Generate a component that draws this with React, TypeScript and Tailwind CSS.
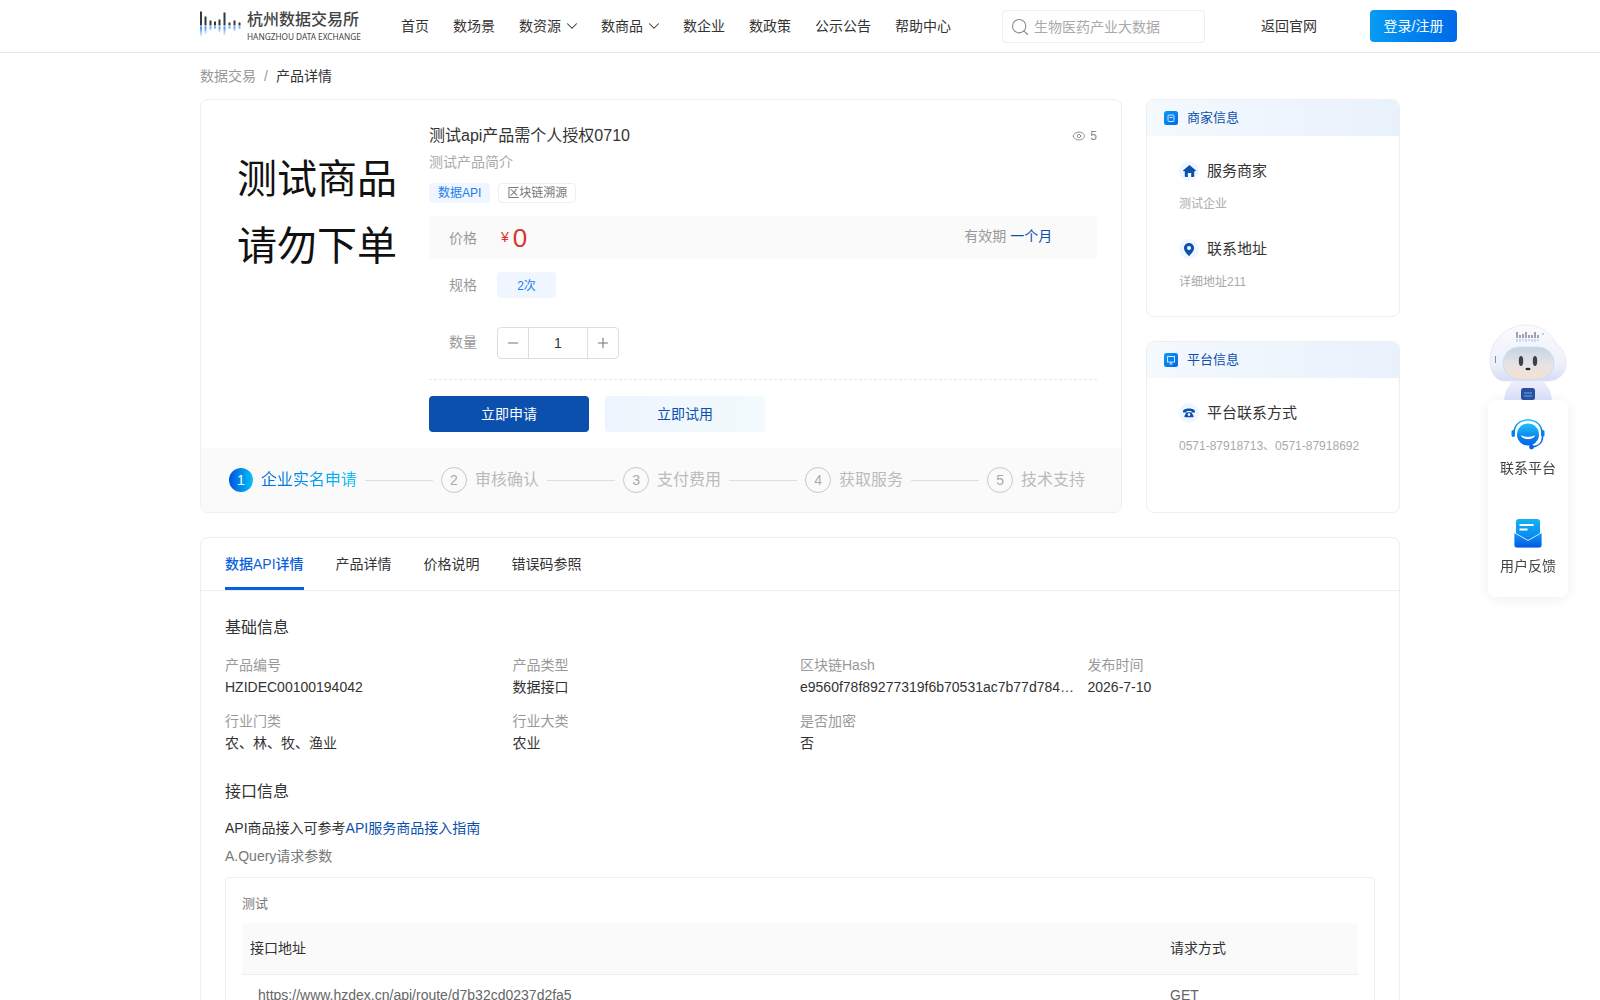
import { ChevronDown, Eye, Minus, Plus, Search } from "lucide-react"

const font = { fontFamily: '"Liberation Sans", "Noto Sans CJK SC", sans-serif' }

// logo bars: x, dark height, blue height
const bars: [number, number, number][] = [
    [0, 14, 10], [4.5, 9, 8], [9.5, 5, 4], [14, 4, 3], [18.5, 6, 6], [23.5, 13, 9], [28.5, 3, 3], [33.5, 5, 5], [38.5, 3, 3],
]

const navs = [
    { name: "首页" },
    { name: "数场景" },
    { name: "数资源", arrow: true },
    { name: "数商品", arrow: true },
    { name: "数企业" },
    { name: "数政策" },
    { name: "公示公告" },
    { name: "帮助中心" },
]

const steps = ["企业实名申请", "审核确认", "支付费用", "获取服务", "技术支持"]

const tabs = ["数据API详情", "产品详情", "价格说明", "错误码参照"]

const info = [
    { label: "产品编号", value: "HZIDEC00100194042" },
    { label: "产品类型", value: "数据接口" },
    { label: "区块链Hash", value: "e9560f78f89277319f6b70531ac7b77d784…" },
    { label: "发布时间", value: "2026-7-10" },
    { label: "行业门类", value: "农、林、牧、渔业" },
    { label: "行业大类", value: "农业" },
    { label: "是否加密", value: "否" },
]

function Logo() {
    return (
        <div className="flex w-[201px] items-center gap-[5px]">
            <svg width="42" height="30" viewBox="0 0 42 30">
                <defs>
                    <linearGradient id="logoBlue" x1="0" y1="0" x2="0" y2="1">
                        <stop offset="0" stopColor="#2f8df5" />
                        <stop offset="1" stopColor="#2f8df5" stopOpacity="0.1" />
                    </linearGradient>
                </defs>
                {bars.map(([x, h, b], i) => (
                    <g key={i}>
                        <rect x={x} y={14.5 - h} width="2" height={h} fill="#333a42" />
                        <rect x={x} y={15.5} width="2" height={b} fill="url(#logoBlue)" />
                    </g>
                ))}
            </svg>
            <div className="text-[#444]">
                <div className="text-[16px] leading-[20px] font-medium">杭州数据交易所</div>
                <div className="mt-[1px] text-[8.25px] leading-[11px] whitespace-nowrap" style={{ fontFamily: '"Noto Sans", sans-serif' }}>HANGZHOU DATA EXCHANGE</div>
            </div>
        </div>
    )
}

function Header() {
    return (
        <div className="flex h-[53px] items-center border-b border-[#e8e8e8] pl-[200px] text-[14px] text-[#333]">
            <Logo />
            <div className="flex w-[550px] items-center gap-6">
                {navs.map((el) => (
                    <div key={el.name} className="flex items-center">
                        <span>{el.name}</span>
                        {el.arrow && <ChevronDown className="-mr-[3.5px] ml-[1.5px] size-[18px]" strokeWidth={1.4} />}
                    </div>
                ))}
            </div>
            <div className="mt-[1px] ml-[51px] flex h-[33px] w-[203px] items-center gap-[4px] rounded border border-[#eee] pt-[1px] pl-[7px] text-[#aaa]">
                <Search className="size-[20px] text-[#888]" strokeWidth={1.3} />
                <span>生物医药产业大数据</span>
            </div>
            <div className="ml-[56px]">返回官网</div>
            <div className="ml-[53px] flex h-[32px] w-[87px] items-center justify-center rounded bg-linear-to-r from-[#0a9bf3] to-[#0068e8] text-white">
                登录/注册
            </div>
        </div>
    )
}

function Steps() {
    return (
        <div className="flex h-[64px] items-center rounded-b-lg bg-[#fafafa] pl-[28px]">
            {steps.map((el, i) => (
                <div key={el} className="flex items-center">
                    {i === 0 ? (
                        <>
                            <div className="flex size-[24px] items-center justify-center rounded-full bg-linear-to-r from-[#0a50e0] to-[#14c0f8] text-[14px] text-white">1</div>
                            <span className="ml-[8px] bg-linear-to-r from-[#0a5fe0] to-[#1dc7f5] bg-clip-text text-[16px] text-transparent">{el}</span>
                        </>
                    ) : (
                        <>
                            <div className="flex size-[26px] items-center justify-center rounded-full border border-[#c8c8c8] text-[14px] text-[#aaa]">{i + 1}</div>
                            <span className="ml-[8px] text-[16px] text-[#bbb]">{el}</span>
                        </>
                    )}
                    {i < steps.length - 1 && <div className="mx-[8px] h-px w-[68px] bg-[#ddd]" />}
                </div>
            ))}
        </div>
    )
}

function ProductCard() {
    return (
        <div className="w-[922px] rounded-lg border border-[#eee]">
            <div className="flex h-[348px]">
                <div className="w-[228px] pt-[46px] pl-[36px] text-[40px] leading-[67px] text-[#111]">
                    <div>测试商品</div>
                    <div>请勿下单</div>
                </div>
                <div className="w-[668px] pt-[26px]">
                    <div className="flex h-[20px] items-center justify-between">
                        <span className="text-[16px] text-[#333]">测试api产品需个人授权0710</span>
                        <span className="flex items-center gap-[4px] text-[12px] text-[#888]">
                            <Eye className="size-[14px]" strokeWidth={1.5} />5
                        </span>
                    </div>
                    <div className="mt-[6px] h-[20px] text-[14px] leading-[20px] text-[#aaa]">测试产品简介</div>
                    <div className="mt-[11px] flex h-[20px] gap-[8px] text-[12px] leading-[21px]">
                        <span className="rounded-sm bg-[#eff6ff] px-[9px] text-[#1a7cf0]">数据API</span>
                        <span className="rounded-sm border border-[#eee] px-[8px] leading-[19px] text-[#777]">区块链溯源</span>
                    </div>
                    <div className="mt-[13px] flex h-[43px] items-center rounded bg-[#fafafa] pl-[20px]">
                        <span className="w-[52px] pt-[2px] text-[14px] text-[#999]">价格</span>
                        <span className="text-[14px] text-[#d9352a]">¥</span>
                        <span className="mt-[1px] ml-[4px] text-[26px] leading-none text-[#d9352a]">0</span>
                        <span className="ml-[437px] -translate-y-[1px] text-[14px] text-[#999]">有效期</span>
                        <span className="ml-[4px] -translate-y-[1px] text-[14px] text-[#0b50ad]">一个月</span>
                    </div>
                    <div className="mt-[13px] flex h-[26px] items-center pl-[20px]">
                        <span className="w-[48px] text-[14px] text-[#999]">规格</span>
                        <span className="flex h-[26px] w-[59px] items-center justify-center rounded-sm bg-[#eff6ff] pt-[1px] text-[12px] text-[#1a7cf0]">2次</span>
                    </div>
                    <div className="mt-[29px] flex h-[32px] items-center pl-[20px]">
                        <span className="w-[48px] -translate-y-[1px] text-[14px] text-[#999]">数量</span>
                        <div className="flex h-[32px] w-[122px] rounded border border-[#ddd] text-[14px] text-[#333]">
                            <div className="flex w-[31px] items-center justify-center border-r border-[#ddd]">
                                <Minus className="size-[16px] text-[#777]" strokeWidth={1.6} />
                            </div>
                            <div className="flex flex-1 items-center justify-center">1</div>
                            <div className="flex w-[31px] items-center justify-center border-l border-[#ddd]">
                                <Plus className="size-[16px] text-[#777]" strokeWidth={1.6} />
                            </div>
                        </div>
                    </div>
                    <div className="mt-[20px] border-t border-dashed border-[#e8e8e8]" />
                    <div className="mt-[16px] flex gap-[16px] text-[14px]">
                        <div className="flex h-[36px] w-[160px] items-center justify-center rounded-sm bg-[#0b50ad] text-white">立即申请</div>
                        <div className="flex h-[36px] w-[160px] items-center justify-center rounded-sm bg-linear-to-r from-[#eef4fd] to-[#f2fafd] text-[#0b50ad]">立即试用</div>
                    </div>
                </div>
            </div>
            <Steps />
        </div>
    )
}

function SmallIcon({ kind }: { kind: "shop" | "screen" }) {
    return (
        <svg width="14" height="14" viewBox="0 0 14 14">
            <defs>
                <linearGradient id={`small-${kind}`} x1="0" y1="0" x2="1" y2="1">
                    <stop offset="0" stopColor="#0c9af5" />
                    <stop offset="1" stopColor="#0068e8" />
                </linearGradient>
            </defs>
            <rect width="14" height="14" rx="2.5" fill={`url(#small-${kind})`} />
            {kind === "shop" ? (
                <>
                    <rect x="4" y="4" width="6" height="6.5" rx="1" fill="none" stroke="#cfe6ff" strokeWidth="1" />
                    <path d="M5.5 6.5h3" stroke="#cfe6ff" strokeWidth="1" />
                </>
            ) : (
                <>
                    <rect x="3.5" y="3.5" width="7" height="5.5" fill="none" stroke="#cfe6ff" strokeWidth="1" />
                    <path d="M7 9v2M5.5 11h3" stroke="#cfe6ff" strokeWidth="1" />
                </>
            )}
        </svg>
    )
}

function HomeGlyph() {
    return (
        <svg width="13" height="12" viewBox="0 0 13 12" fill="#0b50ad">
            <path d="M6.5 0L13 5.6C13 6 12.7 6.3 12.3 6.3H11.2V11.2C11.2 11.6 10.9 12 10.5 12H8.2V8H4.8V12H2.5C2.1 12 1.8 11.6 1.8 11.2V6.3H0.7C0.3 6.3 0 6 0 5.6Z" />
        </svg>
    )
}

function PinGlyph() {
    return (
        <svg width="10" height="13" viewBox="0 0 10 13">
            <path d="M5 0C2.2 0 0 2.2 0 5C0 8.2 3.4 11.6 5 13C6.6 11.6 10 8.2 10 5C10 2.2 7.8 0 5 0Z" fill="#0b50ad" />
            <circle cx="5" cy="5" r="2" fill="#fff" />
        </svg>
    )
}

function PhoneGlyph() {
    return (
        <svg width="12" height="10" viewBox="0 0 12 10" fill="#0b50ad">
            <path d="M0 3.6C0 1.8 2.6 0.6 6 0.6s6 1.2 6 3v1H8.6V3.3C8 3 7 2.9 6 2.9S4 3 3.4 3.3v1.3H0z" />
            <path d="M3.6 4.2h4.8L10.6 8c.2.6-.1 1.2-.8 1.2H2.2c-.7 0-1-.6-.8-1.2z" />
            <circle cx="6" cy="6.6" r="1.3" fill="#fff" />
        </svg>
    )
}

function Row({ icon, title, sub }: { icon: React.ReactNode; title: string; sub: string }) {
    return (
        <div>
            <div className="flex h-[20px] items-center gap-[8px]">
                <div className="flex size-[20px] items-center justify-center rounded-full bg-[#eff6ff]">{icon}</div>
                <span className="text-[15px] text-[#333]">{title}</span>
            </div>
            <div className="mt-[13px] h-[20px] text-[12px] leading-[20px] text-[#aaa]">{sub}</div>
        </div>
    )
}

function SideCard({ kind, title, className, children }: { kind: "shop" | "screen"; title: string; className: string; children: React.ReactNode }) {
    return (
        <div className={`w-[254px] rounded-lg border border-[#eee] ${className}`}>
            <div className="flex h-[36px] items-center gap-[9px] rounded-t-lg bg-linear-to-r from-[#f4f9fe] to-[#e9f1fc] pl-[17px]">
                <SmallIcon kind={kind} />
                <span className="text-[13px] text-[#0b50ad]">{title}</span>
            </div>
            <div className="px-[32px] pt-[25px]">{children}</div>
        </div>
    )
}

function Details() {
    return (
        <div className="mt-[24px] rounded-t-lg border border-[#eee]">
            <div className="flex h-[53px] gap-[32px] border-b border-[#eee] px-[24px] text-[14px] text-[#333]">
                {tabs.map((el, i) => (
                    <div key={el} className={i === 0 ? "flex items-center border-b-[3px] border-[#0a5fdc] pt-[3px] font-medium text-[#0a5fdc]" : "flex items-center"}>
                        {el}
                    </div>
                ))}
            </div>
            <div className="px-[24px] pt-[27px]">
                <div className="h-[20px] text-[16px] leading-[20px] text-[#333]">基础信息</div>
                <div className="mt-[16px] grid grid-cols-[repeat(4,274px)] gap-x-[13.5px] gap-y-[12px] text-[14px] leading-[22px]">
                    {info.map((el) => (
                        <div key={el.label}>
                            <div className="text-[#999]">{el.label}</div>
                            <div className="whitespace-nowrap text-[#333]">{el.value}</div>
                        </div>
                    ))}
                </div>
                <div className="mt-[28px] h-[20px] text-[16px] leading-[20px] text-[#333]">接口信息</div>
                <div className="mt-[16px] h-[20px] text-[14px] leading-[20px] text-[#333]">
                    API商品接入可参考<span className="text-[#0b50ad]">API服务商品接入指南</span>
                </div>
                <div className="mt-[8px] h-[20px] text-[14px] leading-[20px] text-[#777]">A.Query请求参数</div>
                <div className="mt-[11px] rounded border border-[#eee] px-[16px] pt-[16px]">
                    <div className="h-[20px] text-[13px] leading-[20px] text-[#777]">测试</div>
                    <div className="mt-[9px] flex h-[52px] items-center border-b border-[#eee] bg-[#fafafa] pl-[8px] text-[14px] text-[#333]">
                        <span className="w-[920px]">接口地址</span>
                        <span>请求方式</span>
                    </div>
                    <div className="flex pt-[10px] pl-[16px] text-[14px] text-[#666]">
                        <span className="w-[912px]">https://www.hzdex.cn/api/route/d7b32cd0237d2fa5</span>
                        <span>GET</span>
                    </div>
                </div>
            </div>
        </div>
    )
}

function Robot() {
    return (
        <svg width="80" height="76" viewBox="0 0 80 76">
            <defs>
                <linearGradient id="robotHead" x1="0" y1="0" x2="0" y2="1">
                    <stop offset="0" stopColor="#fbfbfe" />
                    <stop offset="0.7" stopColor="#eef0fa" />
                    <stop offset="1" stopColor="#d5dbf5" />
                </linearGradient>
                <linearGradient id="robotVisor" x1="0" y1="0" x2="0" y2="1">
                    <stop offset="0" stopColor="#c6d3e0" />
                    <stop offset="0.55" stopColor="#e4e4e6" />
                    <stop offset="1" stopColor="#fadfd0" />
                </linearGradient>
                <linearGradient id="robotBody" x1="0" y1="0" x2="0" y2="1">
                    <stop offset="0" stopColor="#f2f3fc" />
                    <stop offset="1" stopColor="#d8dcf6" />
                </linearGradient>
            </defs>
            <path d="M16 76C17 66 22 57 30 54H50C58 57 63 66 64 76Z" fill="url(#robotBody)" />
            <rect x="33" y="64" width="14" height="12" rx="2.5" fill="#2b4f9e" />
            <path d="M36 69h8M36 72h8" stroke="#56b4ee" strokeWidth="1.2" />
            <path d="M2 36C2 15 20 1 38 1C52 1 63 8 69 21C75 24 78 32 78 40C78 50 70 57 60 57H16C7 57 2 47 2 36Z" fill="url(#robotHead)" stroke="#e4e6f6" strokeWidth="0.8" />
            <rect x="15" y="23" width="51" height="32" rx="16" fill="url(#robotVisor)" stroke="#c4e2f4" strokeWidth="1" />
            <ellipse cx="33" cy="37" rx="2.2" ry="5" fill="#3b3f4c" />
            <ellipse cx="47" cy="37" rx="2.2" ry="5" fill="#3b3f4c" />
            <ellipse cx="40" cy="45" rx="2.6" ry="1.3" fill="#2a2a33" />
            <path d="M29 8v6M32 11v3M35 10v4M38 8v6M41 11v3M44 11v3M47 8v6M50 11v3" stroke="#4a4f5c" strokeWidth="1" />
            <path d="M29 15v3M32 15v3M35 15v2M38 15v3M41 15v2M44 15v3M47 15v3M50 15v2" stroke="#8fc3f5" strokeWidth="1" />
            <circle cx="55" cy="10" r="1" fill="#7fc8f5" />
            <rect x="7" y="32" width="1" height="7" fill="#7d8fb5" />
        </svg>
    )
}

function Floating() {
    return (
        <div className="fixed top-[324px] left-[1488px] w-[80px]">
            <Robot />
            <div className="rounded-lg bg-white text-[14px] text-[#444] shadow-[0_2px_14px_rgba(0,0,0,0.07)]">
                <div className="flex h-[98px] flex-col items-center pt-[19px]">
                    <svg width="34" height="32" viewBox="0 0 34 32">
                        <defs>
                            <linearGradient id="headset" x1="0" y1="0" x2="0" y2="1">
                                <stop offset="0" stopColor="#1fc0fb" />
                                <stop offset="1" stopColor="#0060e6" />
                            </linearGradient>
                        </defs>
                        <path d="M3 14C3 6 9 1 17 1s14 5 14 13" fill="none" stroke="url(#headset)" strokeWidth="1.6" />
                        <circle cx="17" cy="15.5" r="11" fill="url(#headset)" />
                        <path d="M10.5 17C13 20.5 21 20.5 23.5 17C20 18.8 14 18.8 10.5 17Z" fill="#fff" stroke="#fff" strokeLinejoin="round" />
                        <rect x="0.5" y="11" width="3.5" height="7" rx="1.7" fill="#0a7ff0" />
                        <rect x="30" y="11" width="3.5" height="7" rx="1.7" fill="#0a7ff0" />
                        <path d="M31.5 18C31.5 24 27 27.5 21 28" fill="none" stroke="#0a63e6" strokeWidth="1.5" />
                        <circle cx="20.5" cy="28" r="2.4" fill="#0a63e6" />
                    </svg>
                    <span className="mt-[7px] leading-[20px]">联系平台</span>
                </div>
                <div className="flex h-[99px] flex-col items-center pt-[21px]">
                    <svg width="28" height="29" viewBox="0 0 28 29">
                        <defs>
                            <linearGradient id="mailTop" x1="0" y1="0" x2="0" y2="1">
                                <stop offset="0" stopColor="#12b4f8" />
                                <stop offset="1" stopColor="#0a80ee" />
                            </linearGradient>
                            <linearGradient id="mailBottom" x1="0" y1="0" x2="0" y2="1">
                                <stop offset="0" stopColor="#0d9af5" />
                                <stop offset="1" stopColor="#0058e0" />
                            </linearGradient>
                        </defs>
                        <rect x="2" y="0" width="24" height="22" rx="3" fill="url(#mailTop)" />
                        <path d="M5.5 6h14M5.5 10.5h8" stroke="#fff" strokeWidth="1.8" />
                        <path d="M0 13.5L14 21.5L28 13.5V26C28 27.7 26.7 29 25 29H3C1.3 29 0 27.7 0 26Z" fill="url(#mailBottom)" stroke="#fff" strokeWidth="0.8" />
                    </svg>
                    <span className="mt-[8px] leading-[20px]">用户反馈</span>
                </div>
            </div>
        </div>
    )
}

export default function App() {
    return (
        <div className="h-[1000px] overflow-hidden bg-white" style={font}>
            <Header />
            <div className="mx-auto w-[1200px]">
                <div className="flex h-[46px] items-center text-[14px]">
                    <span className="text-[#999]">数据交易</span>
                    <span className="mx-[8px] text-[#999]">/</span>
                    <span className="text-[#333]">产品详情</span>
                </div>
                <div className="flex gap-[24px]">
                    <ProductCard />
                    <div className="flex flex-col gap-[24px]">
                        <SideCard kind="shop" title="商家信息" className="h-[218px]">
                            <div className="flex flex-col gap-[25px]">
                                <Row icon={<HomeGlyph />} title="服务商家" sub="测试企业" />
                                <Row icon={<PinGlyph />} title="联系地址" sub="详细地址211" />
                            </div>
                        </SideCard>
                        <SideCard kind="screen" title="平台信息" className="h-[172px]">
                            <Row icon={<PhoneGlyph />} title="平台联系方式" sub="0571-87918713、0571-87918692" />
                        </SideCard>
                    </div>
                </div>
                <Details />
            </div>
            <Floating />
        </div>
    )
}
